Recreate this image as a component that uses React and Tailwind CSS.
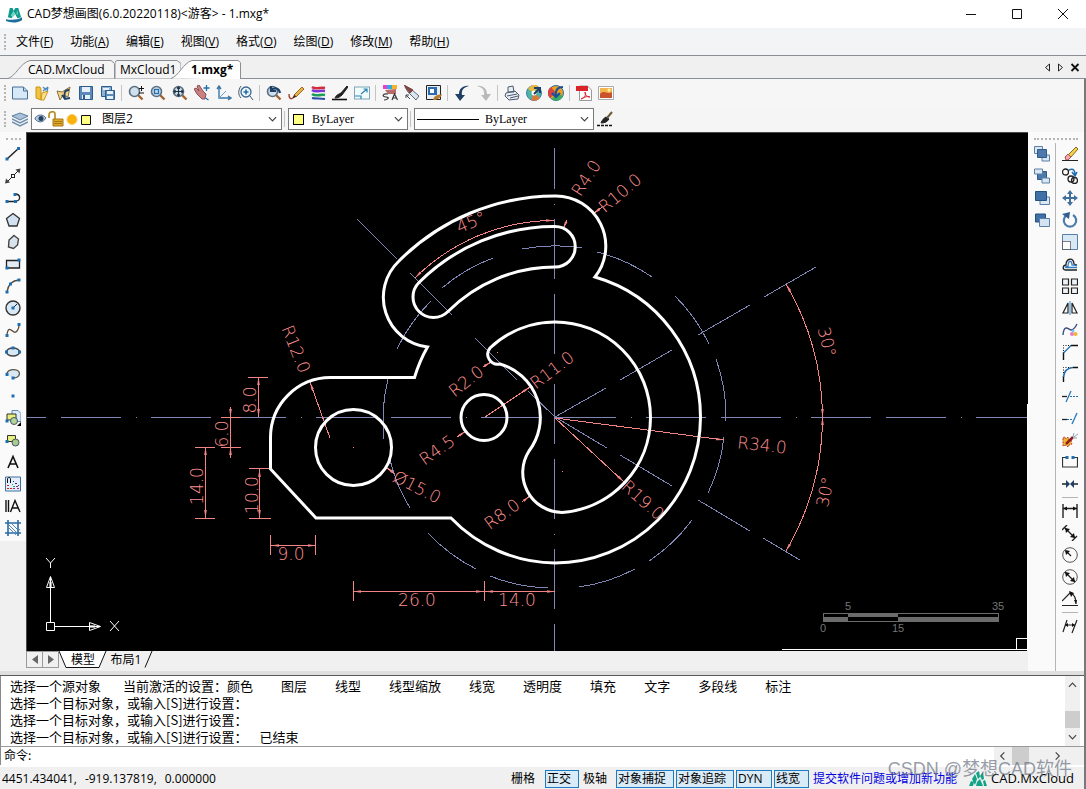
import { useState } from "react";

const UI_FONT = "font-['Open_Sans','Noto_Sans_CJK_SC',sans-serif]";
const COMBO = "relative flex h-[22px] items-center border border-[#7a7a7a] bg-white";
const COMBO_SELECT = "h-full w-full min-w-0 flex-1 cursor-pointer appearance-none bg-transparent text-xs text-black outline-none";
const TOOL_BTN = "flex h-[22px] w-[22px] shrink-0 items-center justify-center hover:bg-sky-100";
const DOC_TAB = "relative -mb-px h-[19px] text-left text-xs leading-[17px]";

const BLUE = "#1f6fb0";
const NAVY = "#1f3f66";

function Icon({ children }) {
  return (
    <svg viewBox="0 0 16 16" width="16" height="16" fill="none" stroke="#222" strokeWidth="1" aria-hidden>
      {children}
    </svg>
  );
}

function Nodes({ at }) {
  return at.map(([x, y]) => (
    <rect key={`${x}-${y}`} x={x - 1.5} y={y - 1.5} width="3" height="3" fill={BLUE} stroke="none" />
  ));
}

function Lens({ children }) {
  return (
    <>
      <path d="M10 10l4.500 4.500" stroke="#a0622e" strokeWidth="2.4" />
      <circle cx="6.5" cy="6.5" r="5" fill="#cfe0ee" stroke="#5c6f80" strokeWidth="1.6" />
      {children}
    </>
  );
}

const FILE_TOOLS = [
  [
    ["新建", <><path d="M.5 2h11l4 4v8H.5z" fill="#d7e9f7" stroke="#446e94" /><path d="M11.5 2v4h4" stroke="#446e94" /></>],
    ["打开", <><path d="M2 2h4l1 2v11l-5-2z" fill="#f2c23e" stroke="#c99619" /><path d="M7 15l1-7 6-2-4 9z" fill="#ffe08a" stroke="#c99619" /><path d="M9 6l5-4M14 2l-1 4M9 2l3 3" stroke="#4a8bbf" strokeWidth="1.4" /></>],
    ["打开云图", <><path d="M1 6l5 1 8-5-2 10-5-2-3 5z" fill="#f1d68a" stroke="#8a7340" /><path d="M13 5C8 5 8 9 9 13M6 10l3 4 5-1" stroke={NAVY} strokeWidth="1.8" /></>],
    ["保存", <><path d="M1.5 1.5h13v13h-13z" fill="#5c8ab8" stroke="#2e5c8a" /><path d="M4 2h8v5H4zM4 10h8v4H4z" fill="#e6f0f8" stroke="none" /><path d="M5 10h2v4H5z" fill="#2e5c8a" stroke="none" /></>],
    ["另存为", <><path d="M1.5 1.5h10v10h-10z" fill="#8db2d4" stroke="#2e5c8a" /><path d="M5.5 5.5h9v9h-9z" fill="#5c8ab8" stroke="#2e5c8a" /><path d="M7 6h6v3H7zM7 11h6v3H7zM3 3h6v2H3z" fill="#e6f0f8" stroke="none" /></>],
  ],
  [
    ["缩放", <><Lens /><path d="M11 3.5h5M13.5 1v5M11 8h5" stroke="#111" /></>],
    ["窗口缩放", <Lens><rect x="4.5" y="4.5" width="4" height="4" stroke={BLUE} strokeWidth="1.3" /></Lens>],
    ["范围缩放", <><Lens /><path d="M6.5 2v9M2 6.5h9M5 3.5L6.5 2 8 3.5M5 9.500L6.500 11 8 9.500M3.500 5L2 6.500 3.500 8M9.500 5L11 6.500 9.500 8" stroke="#234" strokeWidth="1.2" /></>],
    ["平移", <><path d="M0 4l2-1 3 3-2-5 2-1 4 6 3 3-1 5H8L3 9z" fill="#c98080" stroke="#8d5050" /><path d="M12.5 0v6M9.5 3h6M11.500 13l3 2" stroke={BLUE} strokeWidth="1.3" /></>],
    ["坐标系", <><path d="M3 1v12h12M1 4l2-3 2 3M12 11l3 2-3 2" stroke="#3a76a8" strokeWidth="1.4" /><path d="M3 13l7-7" stroke="#6da2cc" /></>],
    ["实时缩放", <><circle cx="8" cy="7" r="5" fill="#eef5fb" stroke="#3b6890" strokeWidth="1.3" /><path d="M8 4.5v5M5.5 7h5" stroke={BLUE} strokeWidth="1.6" /><path d="M3 1C0 5 0 10 3 13M12 11l3 4" stroke="#456" /></>],
  ],
  [
    ["上一视图", <><Lens /><path d="M14 8C13 3 9 2 5 5M5 1v5h5" stroke={NAVY} strokeWidth="2.2" /></>],
    ["画笔", <><path d="M6 10L14 2l2 2-8 8z" fill="#e9b44c" stroke="#9b6a1c" /><path d="M1 9c0 8 5 4 6 1" stroke="#a83c28" strokeWidth="1.4" /><path d="M5 13l1-3 2 2z" fill="#222" stroke="none" /></>],
    ["图层颜色", <><path d="M2 2c4 3 8 0 13 1" stroke="#d22c3e" strokeWidth="2.6" /><path d="M2 5c4 3 8 0 13 1" stroke="#7b35d6" strokeWidth="2.4" /><path d="M2 9c4 3 8 0 13 1" stroke="#1f9d57" strokeWidth="2.6" /><path d="M2 13c4 1 8 0 13 1" stroke="#2b4fa8" strokeWidth="2" /></>],
    ["线型", <><path d="M3 13c1-3 4-4 6-5l6-7 1 1-6 8c-2 2-4 3-7 3z" fill="#222" /><path d="M0 14.5h15" stroke="#111" strokeWidth="1.6" /></>],
    ["全屏", <><rect x=".5" y="2" width="15" height="12" fill="#f2fafc" stroke="#7da6b8" /><path d="M7 9l6-5M9.500 4H13v3.500M1 11h6v3" stroke="#2a86b5" strokeWidth="1.2" /></>],
  ],
  [
    ["特性", <><path d="M1 0h4v4H1z" fill="#f03bd0" stroke="none" /><path d="M5 0h5v4H5z" fill="#33aadd" stroke="none" /><path d="M10 0h5v4h-5z" fill="#f7b12b" stroke="none" /><path d="M3 5l11-1v5H6z" fill="#b76b6b" stroke="none" /><path d="M6 9c-6-1-6 3-2 3s2 3-2 3M10 15l2.500-6 3 6M11 13h4" stroke="#333" strokeWidth="1.2" /></>],
    ["特性匹配", <><path d="M1 2l6 2 8 7-3 4-8-8z" fill="#d8e6ee" stroke="#667" /><path d="M0 0l9 5-3 3z" fill="#8a4a4a" stroke="#7a3d3d" /><path d="M2 10l4 4M2 13v-3h3" stroke="#445" /></>],
    ["块编辑", <><path d="M.5.5h14v14H.500z" fill="#e8edf2" stroke="#222" /><path d="M2 2h9v8H2z" fill="#2b6cb0" stroke="none" /><path d="M4 4h4v4H4z" fill="#fff" stroke="none" /><path d="M7 15c1-4 3-5 9-6-1 4-5 6-9 6z" fill="#b67a32" stroke="none" /></>],
  ],
  [
    ["撤销", <path d="M15 1C9 0 5 4 5 9H1l5 7 5-6H8C7 5 10 2 15 1z" fill={NAVY} stroke="none" />],
    ["重做", <path d="M1 1c6-1 10 3 10 8h4l-5 7-5-6h3C9 5 6 2 1 1z" fill="#b9b9b9" stroke="none" />],
  ],
  [
    ["打印", <><path d="M4 7l0-5 5-1 1 6zM2 8l9-2 4 4-1 4-9 1-4-4z" fill="#e8eef3" stroke="#4b5a6d" /><path d="M3 11l10-2M6 13l8-2" stroke="#4b5a6d" /></>],
    ["发布", <><circle cx="8" cy="8" r="7.5" fill="#4fb3a5" stroke="#3b7fb1" /><path d="M8 8L2 4a7 7 0 0 1 10-3z" fill="#e9b93f" stroke="none" /><path d="M8 8l6 5a7 7 0 0 1-9 2z" fill="#d87a3c" stroke="none" /><circle cx="8" cy="8" r="2.500" fill="#fff" stroke="none" /><path d="M8 3h6v5M13 4L8 9" stroke={NAVY} strokeWidth="2" /></>],
    ["云同步", <><circle cx="8" cy="8" r="7.5" fill="#e8a21f" stroke="#2f6da8" /><path d="M8 8L3 2a7 7 0 0 0-1 11z" fill="#d8433e" stroke="none" /><path d="M8 8l7 3a7 7 0 0 1-11 3z" fill="#38b060" stroke="none" /><path d="M15 2C9 2 7 6 8 11M4 8l4 4 4-4" stroke="#1e4f9a" strokeWidth="2.2" /></>],
  ],
  [
    ["输出PDF", <><path d="M3.500 1h8l4 4v10.500h-12z" fill="#fff" stroke="#999" /><path d="M0 1h12v5H0z" fill="#d9252a" stroke="none" /><path d="M5 14c4-1 5-4 4-7 0 3 2 5 5 5-3-1-6 0-9 2z" stroke="#d9252a" /></>],
    ["输出图片", <><path d="M.5 1.5h15v13H.500z" fill="#fff" stroke="#aaa" /><path d="M2 3h12v10H2z" fill="#f3b64d" stroke="none" /><path d="M2 9c4-5 7 1 12-2v6H2z" fill="#c9532c" stroke="none" /><circle cx="11" cy="5" r="1.5" fill="#fff3b0" stroke="none" /></>],
  ],
];

const DRAW_TOOLS = [
  ["直线", <><path d="M2 13L14 2" strokeWidth="1.5" /><Nodes at={[[2, 13], [13.5, 2.5]]} /></>],
  ["构造线", <><path d="M1 15L15 1" /><path d="M0 15.5l1-5 4 4zM15.500.5l-5 1 4 4z" fill="#444" stroke="none" /><rect x="6.500" y="6.500" width="3" height="3" fill="#fff" /></>],
  ["多段线", <><path d="M2 11.5h9M10 4c6 0 6 7 1 7" strokeWidth="1.3" /><Nodes at={[[2, 11.5], [10.5, 11.5], [10, 4.5]]} /></>],
  ["正多边形", <path d="M8 1.5l6.500 5L12 14H4L1.500 6.500z" fill="#d3e2f0" stroke="#333" strokeWidth="1.3" />],
  ["多边形", <path d="M9 1.5l4.500 3.500-1 6-4 3.500-5-1.500.5-7z" fill="#d9e3ee" stroke="#444" strokeWidth="1.4" />],
  ["矩形", <><path d="M1.5 4.5h13v7.500h-13z" fill="#e3ecf5" strokeWidth="1.3" /><Nodes at={[[2, 12], [14, 4]]} /></>],
  ["圆弧", <><path d="M2 14C3 7 7 2.500 14 2" stroke="#5a4a3a" strokeWidth="1.3" /><Nodes at={[[2, 14], [5.5, 6], [14, 2]]} /></>],
  ["圆", <><circle cx="8" cy="8" r="7" fill="#d8e8f5" stroke="#333" strokeWidth="1.4" /><path d="M8 8l4-4" /><Nodes at={[[8, 8]]} /></>],
  ["样条曲线", <><path d="M2 13C3 3 7 9 9 10s5-2 5-7" stroke="#5a4a3a" strokeWidth="1.3" /><Nodes at={[[2, 13.5], [14, 2.5]]} /></>],
  ["椭圆", <><ellipse cx="8" cy="8" rx="6.5" ry="4" fill="#d8e8f5" stroke="#444" strokeWidth="1.4" /><Nodes at={[[1.5, 8], [14.5, 8], [8, 4]]} /></>],
  ["椭圆弧", <><path d="M2 9C1 2 14 2 14.500 7.500 14 12 10 12 8 12" fill="#d8e8f5" stroke="#554" strokeWidth="1.3" /><Nodes at={[[2, 8.5], [8, 12]]} /></>],
  ["点", <Nodes at={[[8, 8]]} />],
  ["插入块", <><path d="M7 .5h6l3 3v8H7z" fill="#dcecf8" stroke="#5b8bb5" /><path d="M2 4h9v6H2z" fill="#e9ef7b" stroke="#333" /><circle cx="9" cy="11" r="3.500" fill="#b5d49a" stroke="#456" /><path d="M16 12v4h-4z" fill="#000" stroke="none" /><Nodes at={[[2, 11]]} /></>],
  ["创建块", <><path d="M2.5 3.5h8v6h-8z" fill="#e9ef7b" stroke="#333" /><circle cx="10.500" cy="10.500" r="3.500" fill="#a9c98e" stroke="#456" /><Nodes at={[[2, 9.5]]} /></>],
  ["单行文字", <path d="M3 14L8 2.500 13 14M4.700 10h6.600" stroke="#111" strokeWidth="1.6" />],
  ["属性", <><path d="M.5 1h15v14H.500z" fill="#e4eef8" stroke="#3d6fa3" /><path d="M2.500 7V3c0-2 3-2 3 0v4" stroke="#111" /><path d="M2 9h2v1H2zM2 12h2v1H2zM5 12h2v1H5z" fill="#cc2222" stroke="none" /><path d="M8 5h1v1H8zM10 7h2v1h-2zM13 9h1v1h-1z" fill="#223366" stroke="none" /><path d="M7 8h1v1H7zM8 10h2v1H8z" fill="#22aa77" stroke="none" /><path d="M8 12h2v1H8zM11 10h2v1h-2zM12 12h2v1h-2z" fill="#a1286e" stroke="none" /></>],
  ["多行文字", <path d="M1 2v12M3.500 2v12M5.500 14L10 2.500 15 14M7 10h6.500" stroke="#111" strokeWidth="1.4" />],
  ["图案填充", <><path d="M3 0v16M13 0v16M0 3h16M0 13h16" stroke="#2a6aa5" strokeWidth="1.6" /><path d="M4 8l5 5M4 5l8 8M7 4l5 5M10 15l5-6" stroke="#4f86b5" /></>],
];

const ORDER_TOOLS = [
  ["前置", <><path d="M.5.5h8v7h-8zM8 9h7.500v6H8z" fill="#dbe8f4" stroke="#5a80a8" /><path d="M3.500 3.500h9v8h-9z" fill="#4d7aab" stroke="#2f5b8a" /></>],
  ["后置", <><path d="M3.500 3.500h9v8h-9z" fill="#4d7aab" stroke="#2f5b8a" /><path d="M.5 1h8v5h-8zM8 10h7.500v5H8z" fill="#dbe8f4" stroke="#5a80a8" /></>],
  ["置于对象之上", <><path d="M6 7h9.500v7.500H6z" fill="#dbe8f4" stroke="#5a80a8" /><path d="M1.500 1.500h11v9h-11z" fill="#4070a5" stroke="#24507f" /></>],
  ["置于对象之下", <><path d="M1.500 2h10v8h-10z" fill="#4070a5" stroke="#24507f" /><path d="M5.500 6.500h10v8h-10z" fill="#d3e3f2" stroke="#5a80a8" /></>],
];

const MODIFY_TOOLS = [
  ["删除", <><path d="M6 9l8-8 2 2-7 8z" fill="#f2d24c" stroke="#8a6a1e" /><path d="M3 11l3-3 3 3-3 3H4z" fill="#efa7a7" stroke="#aa5555" /><path d="M0 14.5h16" stroke="#222" /></>],
  ["复制", <><circle cx="3.500" cy="4" r="3" strokeWidth="1.3" /><circle cx="9" cy="11" r="3" strokeWidth="1.3" /><circle cx="12.500" cy="12.500" r="3" strokeWidth="1.3" /><path d="M7 2c5-2 6 1 6 5M10 4l3 4 2-4" stroke={BLUE} strokeWidth="1.5" /></>],
  ["移动", <><path d="M8 2v12M2 8h12" stroke="#416f9e" strokeWidth="2" /><path d="M8 0l3 4H5zM8 16l3-4H5zM0 8l4-3v6zM16 8l-4-3v6z" fill="#416f9e" stroke="none" /></>],
  ["旋转", <><path d="M5 3A6.200 6.200 0 1 0 11 3" stroke="#4c7cab" strokeWidth="2.2" /><path d="M0 2l8-2-1 7z" fill="#2f5f92" stroke="none" /></>],
  ["缩放", <><path d="M.5.5h15v15H.500z" fill="#d9e8f5" stroke="#5a80a8" /><path d="M.5 7.500h8v8h-8z" fill="#fff" stroke="#111" strokeDasharray="1 1" /></>],
  ["偏移", <><path d="M15 14H3c-3-1-2-5 1-5C4 2 12 1 12 8l3 1" stroke="#222" strokeWidth="1.3" /><path d="M15 11.500H4c-1 0-1-1 2-1C6 4 10 4 10 9l5 .5" stroke="#2f7dc4" strokeWidth="1.3" /></>],
  ["阵列", <path d="M.5 1H6.500v6H.500zM9.500 1h6v6h-6zM.5 10h6v5.500h-6zM9.500 10h6v5.500h-6z" fill="#eef3f8" stroke="#222" strokeWidth="1.2" />],
  ["镜像", <><path d="M6 3v10H1zM10 3v10h5z" stroke="#222" strokeWidth="1.2" /><path d="M8 1v14" stroke="#2f8ad4" /></>],
  ["编辑曲线", <><path d="M1 13C2 1 7 8 9 8s4-2 6-6" stroke="#3a4f80" strokeWidth="1.4" /><circle cx="10" cy="12" r="2" fill="#e879c6" stroke="none" /><circle cx="13.500" cy="12" r="2" fill="#f1b52e" stroke="none" /><circle cx="11" cy="9" r="1.500" fill="#7ec3ef" stroke="none" /></>],
  ["倒角", <><path d="M1.500 8v8M9 1.500h7" stroke="#111" strokeWidth="1.4" /><path d="M1.500 7V1.500H9" stroke="#111" strokeDasharray="1 1.5" /><path d="M1.500 9L9 1.500" stroke={BLUE} strokeWidth="1.3" /></>],
  ["圆角", <><path d="M1.500 10v6M11 1.500h5" stroke="#111" strokeWidth="1.4" /><path d="M1.500 7V1.500H9" stroke="#111" strokeDasharray="1 1.5" /><path d="M1.500 11C2 5 5 2 11 1.500" stroke={BLUE} strokeWidth="1.6" /></>],
  ["修剪", <><path d="M0 8.500h5" strokeWidth="1.3" /><path d="M4 14l5-11" stroke={BLUE} strokeWidth="1.2" /><path d="M8 8.500h8" stroke={BLUE} strokeDasharray="2 1" /></>],
  ["延伸", <><path d="M0 9.500h5" strokeWidth="1.3" /><path d="M5 9.500h6" stroke={BLUE} strokeDasharray="2 1" /><path d="M10 14l5-11" stroke="#2f7dc4" strokeWidth="1.4" /></>],
  ["分解", <><path d="M1 6l2-1 1 2 2-2 1 3 3-1-1 3 1 2-3 1-1 2-2-2-3 1z" fill="#f0b42c" stroke="#c4302b" strokeDasharray="2 1" /><path d="M4 12l7-7" stroke="#8a2020" strokeWidth="2.5" /><path d="M11 5l1-4M12 5l4-3M12 6h3" stroke="#8aa0b5" /></>],
  ["打断", <><path d="M4 3.500H.500v9.500h15V3.500H12" stroke="#333" strokeWidth="1.2" /><Nodes at={[[5, 3.5], [11, 3.5]]} /></>],
  ["合并", <><path d="M0 8h5M16 8h-5" strokeWidth="1.5" /><path d="M4 4l4 4-4 4zM12 4L8 8l4 4z" fill={NAVY} stroke="none" /></>],
];

const DIM_TOOLS = [
  ["线性标注", <><path d="M1 1v14M15 1v14M1 5.500h14" strokeWidth="1.4" /><path d="M1 5.500l4-2v4zM15 5.500l-4-2v4z" fill="#111" stroke="none" /></>],
  ["对齐标注", <><path d="M0 5l5-5M10 16l5-5M3 3l10 10" strokeWidth="1.4" /><path d="M3 3l5 1-4 4zM13 13l-5-1 4-4z" fill="#111" stroke="none" /></>],
  ["半径标注", <><circle cx="8" cy="8" r="7.3" stroke="#555" /><path d="M4 4l5 5" strokeWidth="1.3" /><path d="M3 3l5 1-4 4z" fill="#111" stroke="none" /></>],
  ["直径标注", <><circle cx="8" cy="8" r="7.3" stroke="#555" /><path d="M3 3l10 10" strokeWidth="1.3" /><path d="M3 3l5 1-4 4zM13 13l-5-1 4-4z" fill="#111" stroke="none" /></>],
  ["角度标注", <><path d="M0 14.500h16M0 10l9-9M9 2c4 2 5 6 5 11" strokeWidth="1.2" /><path d="M7 0l5 2-3 4zM14 13l-2-4h3z" fill="#111" stroke="none" /></>],
];

const OBLIQUE_TOOL = [["倾斜标注", <><path d="M1 14L5 2M10 15l5-13M3 7h10" strokeWidth="1.2" /><path d="M3 7l3-2v4zM13 7l-3-2v4z" fill="#111" stroke="none" /></>]];

const MENUS = [
  ["文件", "F"],
  ["功能", "A"],
  ["编辑", "E"],
  ["视图", "V"],
  ["格式", "O"],
  ["绘图", "D"],
  ["修改", "M"],
  ["帮助", "H"],
];

// 点画线圆 (R34) 的各段弧
const RING_ARCS = [
  [726, 421, 716, 359],
  [709, 344, 675, 296],
  [652, 277, 597, 252],
  [582, 248, 522, 249],
  [493, 258, 442, 288],
  [431, 301, 397, 349],
  [388, 379, 384, 439],
  [390, 460, 410, 508],
  [428, 533, 476, 569],
  [490, 576, 548, 588],
  [579, 587, 635, 569],
  [649, 561, 692, 520],
  [708, 493, 724, 437],
];

const AXIS_SEGMENTS = [
  [357, 219, 397, 259],
  [410, 273, 452, 315],
  [475, 338, 517, 380],
  [528, 391, 555, 417],
  [555, 417, 606, 388],
  [620, 380, 672, 350],
  [698, 335, 750, 305],
  [764, 297, 816, 267],
  [555, 417, 607, 448],
  [620, 455, 672, 486],
  [698, 500, 750, 531],
  [763, 538, 800, 560],
];

const DIM_LINES = [
  "M248 377.500h20",
  "M221 417.500h20M221 447.500h20",
  "M195 447.500h20M195 518.500h20",
  "M249 468.500h22M249 518.500h22",
  "M270.500 535v20M315.500 535v20",
  "M353.500 581v20M484.500 581v20",
];

// 起点 -> 终点，箭头在终点
const LEADERS = [
  [330, 438, 310, 382],
  [485, 417, 530, 387],
  [555, 418, 724, 440],
  [555, 418, 624, 482],
  [457, 437, 466, 431],
  [483, 367, 491, 362],
  [522, 502, 530, 496],
  [602, 207, 593, 214],
  [395, 474, 386, 467],
  [567, 220, 563, 229],
];

const DOUBLE_ARROWS = [
  "M258.500 377V417",
  "M205.500 447V518",
  "M259.500 469V518",
  "M271 545.500H316",
  "M353 591.500H484",
  "M485 591.500H555",
  "M415 278A197 197 0 0 1 554 220.500",
  "M786 284A267 267 0 0 1 822.500 417",
  "M822.500 417A267 267 0 0 1 786 551",
];

const DIM_TEXTS = [
  ["R4.0", 586, 178, -57],
  ["R10.0", 620, 193, -40],
  ["45°", 471, 222, -22],
  ["R11.0", 552, 370, -37],
  ["R2.0", 466, 381, -38],
  ["R4.5", 437, 450, -35],
  ["R8.0", 502, 514, -36],
  ["R12.0", 296, 349, 68],
  ["8.0", 250, 400, -90],
  ["6.0", 222, 434, -90],
  ["14.0", 197, 486, -90],
  ["10.0", 252, 495, -90],
  ["9.0", 291, 554, 0],
  ["26.0", 417, 600, 0],
  ["14.0", 517, 600, 0],
  ["Ø15.0", 417, 487, 27],
  ["R34.0", 762, 445, 6],
  ["R19.0", 643, 500, 42],
  ["30°", 827, 342, 76],
  ["30°", 825, 492, -78],
];

function Drawing() {
  return (
    <svg className="block min-h-0 w-full flex-1" viewBox="27 133 1001 518" fill="none" role="img" aria-label="1.mxg">
      <defs>
        <marker id="arrow" viewBox="0 0 9 4" refX="9" refY="2" markerWidth="8" markerHeight="4" orient="auto-start-reverse">
          <path d="M9 2L0 .5v3z" fill="#f28484" />
        </marker>
      </defs>

      {/* 中心线 */}
      <g stroke="#7f86b4" strokeWidth="1" shapeRendering="crispEdges">
        <path d="M27 417.500H1028" strokeDasharray="60 15 1 14 60 15" strokeDashoffset="131" />
        <path d="M554.500 148V651" strokeDasharray="60 15 1 14 60 15" strokeDashoffset="19" />
        {AXIS_SEGMENTS.map((s) => (
          <path key={s.join()} d={`M${s[0]} ${s[1]}L${s[2]} ${s[3]}`} />
        ))}
        {RING_ARCS.map((s) => (
          <path key={s.join()} d={`M${s[0]} ${s[1]}A171 171 0 0 0 ${s[2]} ${s[3]}`} />
        ))}
      </g>

      {/* 标注 */}
      <g stroke="#f28484" strokeWidth="1" shapeRendering="crispEdges">
        {DIM_LINES.map((d) => (
          <path key={d} d={d} />
        ))}
        {DOUBLE_ARROWS.map((d) => (
          <path key={d} d={d} markerStart="url(#arrow)" markerEnd="url(#arrow)" />
        ))}
        <path d="M230.500 407V417" markerEnd="url(#arrow)" />
        <path d="M230.500 417V447" />
        <path d="M230.500 458V447" markerEnd="url(#arrow)" />
        {LEADERS.map((s) => (
          <path key={s.join()} d={`M${s[0]} ${s[1]}L${s[2]} ${s[3]}`} markerEnd="url(#arrow)" />
        ))}
        <path d="M353 447.500h1M562 471.500h1M497 352.500h1" />
      </g>

      {/* 轮廓 */}
      <g stroke="#fff" strokeWidth="3">
        <path d="M555 196A50 50 0 0 1 595 277A146 146 0 0 1 700.500 417.500A146 146 0 0 1 555 563A146 146 0 0 1 451 518H316L270.500 469V437.500A60 60 0 0 1 330.500 377.500H414.500A146 146 0 0 1 427.500 347A50 50 0 0 1 399 261A221 221 0 0 1 555 196Z" />
        <path d="M555 226.500A20 20 0 0 1 555 267A151 151 0 0 0 448 311.500A20.500 20.500 0 0 1 419 282.500A191 191 0 0 1 555 226.500Z" />
        <path d="M490 348A95.500 95.500 0 0 1 555 322A95.500 95.500 0 0 1 650.500 417.500A95.500 95.500 0 0 1 562 512.500A40 40 0 0 1 529 451A55.500 55.500 0 0 0 500 364A10 10 0 0 1 490 348Z" />
        <circle cx="484" cy="417.500" r="23" />
        <circle cx="353.500" cy="447.500" r="38" />
      </g>

      <g fill="#ff9090" className="font-['DejaVu_Sans',sans-serif] text-[17px] font-extralight" textAnchor="middle">
        {DIM_TEXTS.map(([label, x, y, angle]) => (
          <text key={`${label}${x}`} transform={`translate(${x} ${y}) rotate(${angle})`} y="6">
            {label}
          </text>
        ))}
      </g>

      {/* 坐标系图标 */}
      <g stroke="#fff" strokeWidth="1">
        <path d="M46.500 622.500h8v8h-8zM50.500 622V577M54.500 626.500H100" />
        <path d="M46.500 587.500l4-11 4 11zM89.500 622.500l11 4-11 4z" />
        <path d="M49.500 587V582M51.500 587V582M90 625.500h5M90 627.500h5" stroke="#999" />
        <path d="M46 558l4.500 5 4.500-5M50.500 563v5M110 621l9 10M119 621l-9 10" />
      </g>

      {/* 比例尺 */}
      <g shapeRendering="crispEdges">
        <path d="M823.500 613.500h175v8h-175z" stroke="#6b6b6b" />
        <path d="M848 613h50v4h-50zM823 617h25v5h-25zM898 617h101v5H898z" fill="#6b6b6b" />
      </g>
      <g fill="#757575" className="font-['Liberation_Sans',sans-serif] text-[11px]" textAnchor="middle">
        <text x="848" y="610">5</text>
        <text x="998" y="610">35</text>
        <text x="823" y="632">0</text>
        <text x="898" y="632">15</text>
      </g>

      {/* 光标 */}
      <path d="M1027.500 404V651M782 649.500H1028M1016.500 649V638.500H1027" stroke="#fff" shapeRendering="crispEdges" />
    </svg>
  );
}

function ToolButtons({ tools }) {
  return tools.map(([label, art]) => (
    <button key={label} type="button" title={label} aria-label={label} className={TOOL_BTN}>
      <Icon>{art}</Icon>
    </button>
  ));
}

function Grip() {
  return <span className="mr-0.5 ml-1 h-4 w-[3px] shrink-0 border-l-2 border-dotted border-[#b5b5b5]" />;
}

function Divider() {
  return <span className="mr-[3px] ml-0.5 h-4 w-px shrink-0 bg-[#c4c4c4]" />;
}

function Chevron({ className = "" }) {
  return (
    <svg viewBox="0 0 10 6" width="9" height="6" fill="none" stroke="#444" strokeWidth="1.3" className={`pointer-events-none shrink-0 ${className}`} aria-hidden>
      <path d="M1 1l4 4 4-4" />
    </svg>
  );
}

function Logo() {
  return (
    <svg viewBox="0 0 18 18" width="17" height="17" aria-hidden>
      <path d="M4 2h3l1 3 2-3h3l3 10-4 1-3-6-3 6-4-1z" fill="#0e9a8c" />
      <path d="M8 5l2 4-3 3-2-2zM12 4l1 6-2-2z" fill="#6fd6bd" />
      <path d="M0 14c5 1 12 1 17-2v3c-5 3-12 3-17 1z" fill="#1c6f9a" />
    </svg>
  );
}

function CloudLogo() {
  return (
    <svg viewBox="0 0 18 16" width="18" height="16" aria-hidden>
      <path d="M0 15l2-5 3 1-1 4zM3 8l3-5 2 5-2 6zM7 2l3-2 1 6-2 2zM11 5l3-4 1 7-2 1zM8 11l3-3 3 7H7zM14 10l2-1 2 6h-3z" fill="#12a386" />
    </svg>
  );
}

function TitleBar() {
  return (
    <header className="flex h-7 items-center bg-white pl-1.5">
      <Logo />
      <h1 className="ml-1 flex-1 truncate text-xs">CAD梦想画图(6.0.20220118)&lt;游客&gt; - 1.mxg*</h1>
      <button type="button" aria-label="最小化" className="flex h-full w-[46px] items-center justify-center hover:bg-gray-200">
        <svg viewBox="0 0 12 12" width="12" height="12" stroke="#111"><path d="M1 6.5h10" /></svg>
      </button>
      <button type="button" aria-label="最大化" className="flex h-full w-[46px] items-center justify-center hover:bg-gray-200">
        <svg viewBox="0 0 12 12" width="12" height="12" fill="none" stroke="#111"><path d="M1.5 1.5h9v9h-9z" /></svg>
      </button>
      <button type="button" aria-label="关闭" className="flex h-full w-[46px] items-center justify-center hover:bg-red-500">
        <svg viewBox="0 0 12 12" width="12" height="12" stroke="#111"><path d="M1 1l10 10M11 1L1 11" /></svg>
      </button>
    </header>
  );
}

function DocumentTabs() {
  return (
    <div className="flex h-6 items-end border-y border-[#8a8f96] bg-[#f0f0f0]">
      <button type="button" className={`${DOC_TAB} ml-2 w-[107px] pl-5`}>
        <svg className="absolute inset-0" viewBox="0 0 107 19" width="107" height="19" fill="#f4f4f4" stroke="#8a8f96" aria-hidden>
          <path d="M0 18.5C8 16 12 3 22 .5H103l3.500 3v15" />
        </svg>
        <span className="relative">CAD.MxCloud</span>
      </button>
      <button type="button" className={`${DOC_TAB} w-[66px] pl-[5px]`}>
        <svg className="absolute inset-0" viewBox="0 0 66 19" width="66" height="19" fill="#f4f4f4" stroke="#8a8f96" aria-hidden>
          <path d="M0 18.500V2L2 .5H62l4 3v15" />
        </svg>
        <span className="relative">MxCloud1</span>
      </button>
      <button type="button" className={`${DOC_TAB} -ml-[10px] w-[70px] pl-5 font-bold`}>
        <svg className="absolute inset-0" viewBox="0 0 70 19" width="70" height="19" fill="#fff" stroke="#8a8f96" aria-hidden>
          <path d="M0 18.500C8 16 12 3 21 .5H67l2.500 2v17" />
        </svg>
        <span className="relative">1.mxg*</span>
      </button>
      <div className="ml-auto flex items-center gap-1.5 self-center pr-1.5">
        <button type="button" aria-label="上一个">
          <svg viewBox="0 0 7 9" width="7" height="9" fill="none" stroke="#222"><path d="M5.500 1v7L1.500 4.500z" /></svg>
        </button>
        <button type="button" aria-label="下一个">
          <svg viewBox="0 0 7 9" width="7" height="9" fill="none" stroke="#222"><path d="M1.500 1v7l4-3.500z" /></svg>
        </button>
        <button type="button" aria-label="关闭图纸">
          <svg viewBox="0 0 10 9" width="10" height="9" stroke="#111" strokeWidth="1.8"><path d="M1.500 1l7 7M8.500 1l-7 7" /></svg>
        </button>
      </div>
    </div>
  );
}

function PropertyBar() {
  const [layer, setLayer] = useState("图层2");
  return (
    <div className="flex h-[26px] items-center bg-[#f5f5f5]">
      <Grip />
      <button type="button" aria-label="图层管理" className={TOOL_BTN}>
        <Icon>
          <path d="M0 5l8-3 8 3-8 4z" fill="#a9c2da" stroke="#5c7f9f" />
          <path d="M0 8l8 4 8-4M0 11l8 4 8-4" stroke="#6f8faf" strokeWidth="1.5" />
        </Icon>
      </button>
      <div className={`${COMBO} w-[251px] pl-0.5`}>
        <svg viewBox="0 0 58 16" width="58" height="16" fill="none" className="shrink-0" aria-hidden>
          <path d="M1 7c3-4 8-4 11 0-3 5-8 5-11 1z" fill="#b7cbe0" stroke="#58718c" />
          <circle cx="7" cy="7.500" r="2.500" fill="#23405f" />
          <path d="M15 7V3c1-3 6-3 6 0v5" stroke="#b48a1e" strokeWidth="1.6" />
          <path d="M19 8h10v7H19z" fill="#dfa92e" stroke="#a87710" />
          <path d="M20 10.500h8M20 12.500h8" stroke="#a87710" />
          <circle cx="38" cy="8.500" r="5" fill="#fbb20d" stroke="#f4cf62" />
          <path d="M47.500 4.500h9v9h-9z" fill="#ffff80" stroke="#111" />
        </svg>
        <select aria-label="图层" className={`${COMBO_SELECT} pl-2.5`} value={layer} onChange={(e) => setLayer(e.target.value)}>
          <option>图层1</option>
          <option>图层2</option>
        </select>
        <Chevron className="absolute right-1" />
      </div>
      <Divider />
      <div className={`${COMBO} w-[120px] pl-1 font-['Liberation_Serif',serif]`}>
        <span className="h-[11px] w-[11px] shrink-0 border border-black bg-[#ffff80]" />
        <select aria-label="颜色" className={`${COMBO_SELECT} pl-2`} defaultValue="ByLayer">
          <option>ByLayer</option>
          <option>ByBlock</option>
        </select>
        <Chevron className="absolute right-1" />
      </div>
      <Divider />
      <div className={`${COMBO} w-[180px] pl-0.5 font-['Liberation_Serif',serif]`}>
        <span className="h-px w-[62px] shrink-0 bg-black" />
        <select aria-label="线型" className={`${COMBO_SELECT} pl-1.5`} defaultValue="ByLayer">
          <option>ByLayer</option>
          <option>ByBlock</option>
        </select>
        <Chevron className="absolute right-1" />
      </div>
      <button type="button" aria-label="线型管理" className={TOOL_BTN}>
        <Icon>
          <path d="M4 12c1-3 3-5 5-6l3 2c-2 3-4 4-8 4z" fill="#222" />
          <path d="M10 7l5-6" stroke="#6b5a3a" strokeWidth="2" />
          <path d="M0 14.500h16" strokeWidth="1.6" strokeDasharray="3 1" stroke="#111" />
        </Icon>
      </button>
    </div>
  );
}

function LayoutTabs() {
  return (
    <div className="flex h-5 items-start bg-[#f0f0f0] text-xs">
      <button type="button" aria-label="向左" className="flex h-[17px] w-[17px] items-center justify-center border border-[#9a9a9a]">
        <svg viewBox="0 0 6 9" width="6" height="9" fill="#666"><path d="M6 0v9L0 4.500z" /></svg>
      </button>
      <button type="button" aria-label="向右" className="flex h-[17px] w-4 items-center justify-center border-y border-r border-[#9a9a9a]">
        <svg viewBox="0 0 6 9" width="6" height="9" fill="#666"><path d="M0 0v9l6-4.500z" /></svg>
      </button>
      <button type="button" className="relative h-[17px] w-12 text-center leading-[17px]">
        <svg className="absolute inset-0" viewBox="0 0 48 17" width="48" height="17" fill="#fff" stroke="#111" aria-hidden>
          <path d="M0 0l7 16.500H40L47 0" />
        </svg>
        <span className="relative">模型</span>
      </button>
      <button type="button" className="relative h-[17px] w-[46px] pr-2 text-center leading-[17px]">
        <svg className="absolute inset-0" viewBox="0 0 46 17" width="46" height="17" fill="none" stroke="#111" aria-hidden>
          <path d="M-4 9l3 7.500M38 16.500L45 0" />
        </svg>
        <span className="relative">布局1</span>
      </button>
    </div>
  );
}

function CommandPanel() {
  const settings = ["图层", "线型", "线型缩放", "线宽", "透明度", "填充", "文字", "多段线", "标注"];
  return (
    <section className="font-['Noto_Sans_CJK_SC',sans-serif] text-[13px] leading-[17px]">
      <div className="flex border-y border-t-[#5a5a5a] border-b-[#9a9a9a] bg-white">
        <div className="min-w-0 flex-1 border-l border-[#8a8a8a] pt-px pb-px pl-[9px] whitespace-nowrap">
          <p className="flex gap-7">
            <span className="flex gap-[22px]">
              <span>选择一个源对象</span>
              <span>当前激活的设置：颜色</span>
            </span>
            {settings.map((s) => (
              <span key={s}>{s}</span>
            ))}
          </p>
          <p>选择一个目标对象，或输入[S]进行设置：</p>
          <p>选择一个目标对象，或输入[S]进行设置：</p>
          <p className="flex gap-3">
            <span>选择一个目标对象，或输入[S]进行设置：</span>
            <span>已结束</span>
          </p>
        </div>
        <div className="mr-1 flex w-[15px] flex-col items-center justify-between bg-[#f0f0f0] py-1.5">
          <Chevron className="rotate-180" />
          <span className="mt-4 h-[17px] w-full bg-[#cdcdcd]" />
          <Chevron />
        </div>
      </div>
      <div className="flex h-5 items-center border-b-2 border-white bg-[#f0f0f0] text-xs">
        <div className="flex h-full min-w-0 flex-1 items-center border-l border-[#8a8a8a] bg-white pb-0.5 pl-[3px]">
          <label htmlFor="command">命令:</label>
          <input id="command" type="text" className="h-full min-w-0 flex-1 bg-transparent px-1 outline-none" />
        </div>
        <div className="mr-[18px] flex h-full w-[72px] items-center justify-between px-1">
          <Chevron className="rotate-90" />
          <span className="mr-5 h-full w-[17px] bg-[#cdcdcd]" />
          <Chevron className="-rotate-90" />
        </div>
      </div>
    </section>
  );
}

const MODES = [
  ["栅格", false, "w-[34px]"],
  ["正交", true, "w-[34px]"],
  ["极轴", false, "w-[33px]"],
  ["对象捕捉", true, "w-[58px]"],
  ["对象追踪", true, "w-[58px]"],
  ["DYN", true, "w-9"],
  ["线宽", true, "w-[35px]"],
];

function StatusBar() {
  const [active, setActive] = useState(MODES.map((m) => m[1]));
  const toggle = (i) => setActive(active.map((v, j) => (i === j ? !v : v)));

  return (
    <footer className="relative flex h-[22px] items-center bg-[#f0f0f0] pt-0.5 pl-0.5 text-xs whitespace-nowrap">
      <span className="flex flex-1 gap-2">
        <span>4451.434041,</span>
        <span>-919.137819,</span>
        <span>0.000000</span>
      </span>
      <div className="flex gap-0.5">
        {MODES.map(([label, , width], i) => (
          <button
            key={label}
            type="button"
            aria-pressed={active[i]}
            onClick={() => toggle(i)}
            className={`h-[18px] border pl-px text-left leading-4 ${width} ${active[i] ? "border-[#1b7cc4] bg-[#d9ebf7]" : "border-transparent"}`}
          >
            {label}
          </button>
        ))}
      </div>
      <a href="#feedback" className="ml-1 text-[#0000e0]">提交软件问题或增加新功能</a>
      <a href="#cloud" className="mr-2.5 ml-3 flex items-center gap-1 text-[13px]">
        <CloudLogo />
        CAD.MxCloud
      </a>
      <span className="pointer-events-none absolute right-3 bottom-2 font-['Liberation_Sans','Noto_Sans_CJK_SC',sans-serif] text-lg leading-6 text-gray-500/70">
        CSDN @梦想CAD软件
      </span>
    </footer>
  );
}

export default function App() {
  return (
    <div className={`flex min-h-screen flex-col overflow-x-hidden bg-[#f0f0f0] text-black ${UI_FONT}`}>
      <TitleBar />
      <nav className="flex h-[27px] items-center bg-[#f3f4f6] text-xs">
        <Grip />
        <div className="ml-[7px] flex gap-[17px]">
          {MENUS.map(([name, key]) => (
            <button key={key} type="button" className="hover:bg-sky-100">
              {name}(<u>{key}</u>)
            </button>
          ))}
        </div>
      </nav>
      <DocumentTabs />
      <div className="flex flex-1 flex-col border-r-2 border-[#77797c]">
        <div className="flex h-[27px] items-center bg-[#f6f6f6]">
          <Grip />
          {FILE_TOOLS.map((group, i) => (
            <div key={i} className="flex items-center">
              {i > 0 && <Divider />}
              <ToolButtons tools={group} />
            </div>
          ))}
        </div>
        <PropertyBar />

        <main className="flex flex-1">
          <aside className="w-[26px] bg-[#f0f0f0]">
            <div className="flex flex-col items-center bg-[#fafafa] pb-0.5">
              <span className="mt-1.5 mb-[3px] h-0.5 w-[15px] border-t-2 border-dotted border-[#b5b5b5]" />
              <ToolButtons tools={DRAW_TOOLS} />
            </div>
          </aside>

          <div className="flex min-w-0 flex-1 flex-col">
            <div className="flex flex-1 flex-col border-t border-l border-[#4a4a4a] bg-black">
              <Drawing />
            </div>
            <LayoutTabs />
          </div>

          <aside className="flex w-14 flex-col bg-[#fafafa]">
            <span className="mx-1.5 mt-1.5 mb-[3px] h-0.5 border-t-2 border-dotted border-[#b5b5b5]" />
            <div className="flex flex-1">
              <div className="flex w-[27px] flex-col items-center">
                <ToolButtons tools={ORDER_TOOLS} />
              </div>
              <div className="flex flex-1 flex-col items-center border-l border-[#b5b5b5]">
                <ToolButtons tools={MODIFY_TOOLS} />
                <span className="my-0.5 h-px w-4 bg-[#b5b5b5]" />
                <ToolButtons tools={DIM_TOOLS} />
                <span className="my-0.5 h-px w-4 bg-[#b5b5b5]" />
                <ToolButtons tools={OBLIQUE_TOOL} />
              </div>
            </div>
          </aside>
        </main>

        <div className="h-1 bg-[#dfdfdf]" />
        <CommandPanel />
        <StatusBar />
      </div>
    </div>
  );
}
